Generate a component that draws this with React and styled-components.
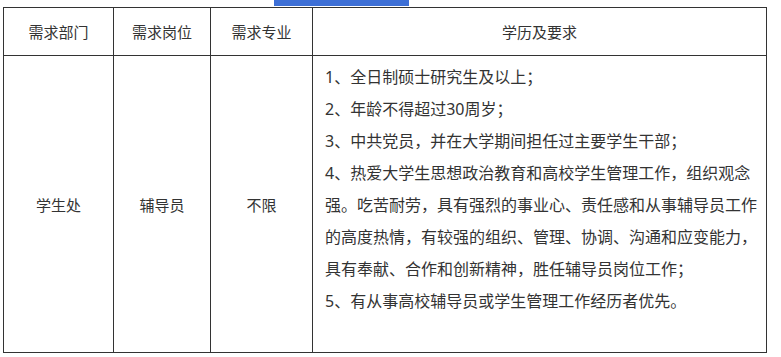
import React from "react";
import styled, { createGlobalStyle } from "styled-components";

const Global = createGlobalStyle`
  html, body { margin: 0; padding: 0; background: #fff; }
  body {
    font-family: "Noto Sans", "Noto Sans CJK SC", sans-serif;
    color: #333;
  }
`;

const Page = styled.div`
  width: 781px;
  height: 357px;
  background: #fff;
  overflow: hidden;
`;

const TopStrip = styled.div`
  height: 7px;
  display: flex;
  padding-left: 274px;
`;

const TitleBand = styled.div`
  width: 135px;
  height: 6px;
  background: #3d6fd6;
`;

const Grid = styled.div`
  margin-left: 3px;
  width: 762px;
  display: grid;
  grid-template-columns: 109px 96px 101px 453px;
  grid-template-rows: 47px 296px;
  gap: 1px;
  padding: 1px;
  background: #333;
`;

const Cell = styled.div`
  background: #fff;
  display: flex;
  align-items: center;
  justify-content: center;
  font-size: 15px;
  color: #333;
  white-space: nowrap;
`;

const ReqCell = styled.div`
  background: #fff;
  padding: 5px 0 0 12px;
  font-size: 16px;
  color: #333;
`;

const Line = styled.div`
  height: 32px;
  line-height: 32px;
  white-space: nowrap;
`;

const headers = ["需求部门", "需求岗位", "需求专业", "学历及要求"];
const cells = ["学生处", "辅导员", "不限"];
const lines = [
  "1、全日制硕士研究生及以上；",
  "2、年龄不得超过30周岁；",
  "3、中共党员，并在大学期间担任过主要学生干部；",
  "4、热爱大学生思想政治教育和高校学生管理工作，组织观念",
  "强。吃苦耐劳，具有强烈的事业心、责任感和从事辅导员工作",
  "的高度热情，有较强的组织、管理、协调、沟通和应变能力，",
  "具有奉献、合作和创新精神，胜任辅导员岗位工作；",
  "5、有从事高校辅导员或学生管理工作经历者优先。",
];

export default function App() {
  return (
    <Page>
      <Global />
      <TopStrip>
        <TitleBand />
      </TopStrip>
      <Grid>
        {headers.map((h) => (
          <Cell key={h}>{h}</Cell>
        ))}
        {cells.map((c) => (
          <Cell key={c}>{c}</Cell>
        ))}
        <ReqCell>
          {lines.map((l) => (
            <Line key={l}>{l}</Line>
          ))}
        </ReqCell>
      </Grid>
    </Page>
  );
}
